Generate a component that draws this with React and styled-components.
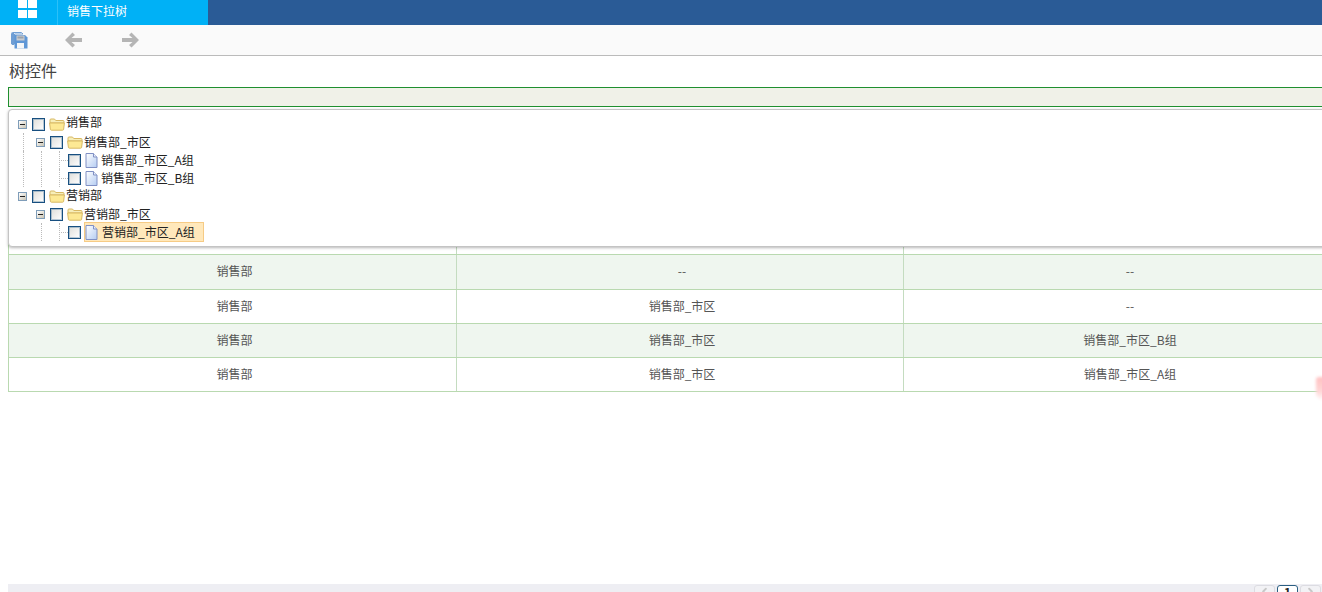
import styled, { createGlobalStyle } from "styled-components";
import { ChevronLeft, ChevronRight } from "lucide-react";

const treeData = [
  { level: 0, label: "销售部", kind: "folder", lift: 3, lines: [] },
  { level: 1, label: "销售部_市区", kind: "folder", lift: 1, lines: [0] },
  { level: 2, label: "销售部_市区_A组", kind: "file", lift: 1, lines: [0, 1, 2] },
  { level: 2, label: "销售部_市区_B组", kind: "file", lift: 1, lines: [0, 1, 2] },
  { level: 0, label: "营销部", kind: "folder", lift: 2, lines: [] },
  { level: 1, label: "营销部_市区", kind: "folder", lift: 1, lines: [] },
  { level: 2, label: "营销部_市区_A组", kind: "file", lift: 1, selected: true, lines: [1, 2] },
];

const rows = [
  ["销售部", "--", "--"],
  ["销售部", "销售部_市区", "--"],
  ["销售部", "销售部_市区", "销售部_市区_B组"],
  ["销售部", "销售部_市区", "销售部_市区_A组"],
];

function SaveIcon() {
  return (
    <svg width="17" height="17" viewBox="0 0 17 17" style={{ display: "block" }}>
      <path d="M.5 1.500a1 1 0 0 1 1-1h9l1.500 1.500H3.500v10H.5z" fill="#fff" stroke="#6f9ed4" />
      <rect x="1" y="1" width="2" height="12" fill="#6f9ed4" />
      <path d="M3.500 3h10.500l2.500 2.500v11H3.500z" fill="#5f97d6" />
      <rect x="5.500" y="3.500" width="8" height="5" fill="#c9ccd0" />
      <rect x="6.500" y="4.500" width="6" height="2" fill="#9aa2ab" />
      <rect x="6" y="11" width="7" height="5.500" fill="#f4f6f8" />
    </svg>
  );
}

function ArrowIcon({ flip }) {
  return (
    <svg
      width="17"
      height="16"
      viewBox="0 0 17 16"
      style={{ display: "block", transform: flip ? "scaleX(-1)" : "none" }}
    >
      <path d="M0 8 7.500.5 10 3 6.500 6H17v4H6.500l3.500 3-2.500 2.500z" fill="#b5b5b5" />
    </svg>
  );
}

function FolderIcon() {
  return (
    <svg width="16" height="13" viewBox="0 0 16 13" style={{ display: "block" }}>
      <path d="M1 3V2a1 1 0 0 1 1-1h3.500l1.200 1.500H14a1 1 0 0 1 1 1V5H1z" fill="#f7eeb8" stroke="#d8b964" />
      <path d="M.6 5h14.800l-.8 6.400a1 1 0 0 1-1 .8H2.400a1 1 0 0 1-1-.8z" fill="#fde994" stroke="#d8b964" />
    </svg>
  );
}

function FileIcon({ id }) {
  return (
    <svg width="13" height="15" viewBox="0 0 13 15" style={{ display: "block" }}>
      <defs>
        <linearGradient id={id} x1="0" y1="0" x2="1" y2="1">
          <stop offset="0" stopColor="#ffffff" />
          <stop offset="1" stopColor="#b4ccf2" />
        </linearGradient>
      </defs>
      <path d="M1 .5h7.500L12 4v10.500H1z" fill={`url(#${id})`} stroke="#8090c4" />
      <path d="M8.500.5V4H12" fill="#e8eefa" stroke="#8090c4" />
    </svg>
  );
}

function App() {
  return (
    <Page>
      <GlobalStyle />
      <TopBar>
        <Logo>
          <LogoGrid>
            <i />
            <i />
            <i />
            <i />
          </LogoGrid>
        </Logo>
        <ActiveTab>销售下拉树</ActiveTab>
      </TopBar>
      <Toolbar>
        <ToolButton $width={54}>
          <SaveIcon />
        </ToolButton>
        <ToolButton $width={57}>
          <ArrowIcon />
        </ToolButton>
        <ToolButton $width={40}>
          <ArrowIcon flip />
        </ToolButton>
      </Toolbar>
      <Title>树控件</Title>
      <Content>
        <SelectBox />
        <TreeWrap>
          <TreePanel>
            {treeData.map((node, i) => (
              <TreeRow key={i} $level={node.level}>
                {node.lines.map((line) => (
                  <Guide key={line} $level={line} />
                ))}
                {node.kind === "folder" ? <Expander /> : <Branch />}
                <Check />
                <NodeLabel $selected={node.selected} $file={node.kind === "file"}>
                  <IconSlot $file={node.kind === "file"} $selected={node.selected}>
                    {node.kind === "folder" ? <FolderIcon /> : <FileIcon id={`sheet${i}`} />}
                  </IconSlot>
                  <LabelText $lift={node.lift}>{node.label}</LabelText>
                </NodeLabel>
              </TreeRow>
            ))}
          </TreePanel>
        </TreeWrap>
        <Table>
          <HeaderRow>
            <Cell />
            <Cell />
            <Cell />
          </HeaderRow>
          {rows.map((row, i) => (
            <Row key={i} $striped={i % 2 === 0}>
              {row.map((text, j) => (
                <Cell key={j}>{text}</Cell>
              ))}
            </Row>
          ))}
        </Table>
        <Pager>
          <PageButton>
            <ChevronLeft size={11} strokeWidth={4} color="#c8c8c8" />
          </PageButton>
          <PageButton $active>1</PageButton>
          <PageButton>
            <ChevronRight size={11} strokeWidth={4} color="#c8c8c8" />
          </PageButton>
        </Pager>
      </Content>
      <Blob />
    </Page>
  );
}

export default App;

const GlobalStyle = createGlobalStyle`
  html, body {
    margin: 0;
    height: 592px;
    overflow: hidden;
    background: #fff;
  }
  * {
    box-sizing: border-box;
  }
`;

const Page = styled.div`
  position: relative;
  width: 1322px;
  height: 592px;
  overflow: hidden;
  font-family: "Noto Sans CJK SC", "Liberation Sans", sans-serif;
  font-size: 12px;
  color: #333;
`;

const TopBar = styled.div`
  height: 25px;
  display: flex;
  background: #2a5b96;
`;

const Logo = styled.div`
  width: 58px;
  padding-left: 18px;
  background: #00b1f6;
  border-right: 1px solid #2cc0f8;
`;

const LogoGrid = styled.div`
  width: 19px;
  height: 18px;
  display: grid;
  grid-template-columns: 9px 9px;
  grid-template-rows: 8px 8px;
  gap: 2px 1px;

  i {
    background: #fff;
  }
`;

const ActiveTab = styled.div`
  width: 150px;
  padding-left: 9px;
  line-height: 21px;
  color: #fff;
  background: #00b1f6;
`;

const Toolbar = styled.div`
  height: 31px;
  display: flex;
  align-items: center;
  padding-left: 11px;
  background: #fafafa;
  border-bottom: 1px solid #bbb;
`;

const ToolButton = styled.div`
  width: ${(p) => p.$width}px;
  display: flex;
  align-items: center;
`;

const Title = styled.div`
  height: 31px;
  padding-left: 9px;
  font-size: 16px;
  line-height: 28px;
  color: #444;
`;

const Content = styled.div`
  position: relative;
  padding-left: 8px;
`;

const SelectBox = styled.div`
  width: 1330px;
  height: 20px;
  background: #f0f1e8;
  border: 1px solid #1f8f2f;
`;

const TreeWrap = styled.div`
  position: absolute;
  z-index: 2;
  top: 22px;
  left: 8px;
`;

const TreePanel = styled.div`
  width: 1340px;
  height: 138px;
  padding: 5px 0 0 9px;
  background: #fff;
  border: 1px solid #c4c4c4;
  border-radius: 4px;
  box-shadow: 0 1px 3px rgba(0, 0, 0, 0.28);
`;

const TreeRow = styled.div`
  position: relative;
  height: 18px;
  display: flex;
  align-items: center;
  padding-left: ${(p) => p.$level * 18}px;
`;

const Guide = styled.span`
  position: absolute;
  top: 0;
  bottom: 0;
  left: ${(p) => p.$level * 18 + 5}px;
  border-left: 1px dotted #bbb;
`;

const Expander = styled.span`
  position: relative;
  width: 9px;
  height: 9px;
  margin-right: 5px;
  background: linear-gradient(135deg, #fff, #c9c4b4);
  border: 1px solid #7f9db9;

  &::after {
    content: "";
    position: absolute;
    left: 1px;
    right: 1px;
    top: 3px;
    height: 1px;
    background: #222;
  }
`;

const Branch = styled.span`
  width: 9px;
  height: 1px;
  margin-left: 5px;
  border-top: 1px dotted #bbb;
`;

const Check = styled.span`
  width: 13px;
  height: 13px;
  flex: none;
  background: linear-gradient(135deg, #dededa, #fff);
  border: 1px solid #174f80;
  box-shadow: inset 0 0 0 1px rgba(30, 90, 138, 0.3);
`;

const NodeLabel = styled.span`
  height: 18px;
  display: flex;
  align-items: center;
  margin-left: ${(p) => (p.$selected ? 4 : p.$file ? 3 : 4)}px;
  padding-right: ${(p) => (p.$selected ? 8 : 0)}px;
  white-space: nowrap;
  color: #222;
  background: ${(p) => (p.$selected ? "#ffe8bb" : "transparent")};
  outline: ${(p) => (p.$selected ? "1px solid #f6cb85" : "none")};
`;

const IconSlot = styled.span`
  display: flex;
  align-items: center;
  margin-left: ${(p) => (p.$file && !p.$selected ? 1 : 0)}px;
  margin-right: ${(p) => (p.$selected ? 4 : p.$file ? 3 : 1)}px;
`;

const LabelText = styled.span`
  position: relative;
  top: -${(p) => p.$lift}px;
`;

const Table = styled.div`
  width: 1344px;
  margin-top: 114px;
  border-left: 1px solid #b9d9b0;
`;

const Row = styled.div`
  height: 34.25px;
  display: grid;
  grid-template-columns: 448px 447px 449px;
  background: ${(p) => (p.$striped ? "#eff6ef" : "#fff")};
  border-bottom: 1px solid #b9d9b0;
`;

const HeaderRow = styled(Row)`
  background: #fff;
`;

const Cell = styled.div`
  display: flex;
  align-items: center;
  justify-content: center;
  padding: 0 0 2px 4px;
  font-size: 12px;
  color: #555;
  border-right: 1px solid #c4dcc0;
`;

const Pager = styled.div`
  width: 1320px;
  height: 30px;
  display: flex;
  gap: 2px;
  margin-top: 192px;
  padding: 1px 0 0 1246px;
  background: #eeeef3;
`;

const PageButton = styled.div`
  width: 21px;
  height: 24px;
  display: flex;
  justify-content: center;
  font-size: 12px;
  font-weight: 700;
  line-height: 12px;
  color: #222;
  background: ${(p) => (p.$active ? "#fff" : "#f2f2f5")};
  border: 1px solid ${(p) => (p.$active ? "#2b5f82" : "#dcdce2")};
  border-radius: 3px;
`;

const Blob = styled.div`
  position: absolute;
  top: 377px;
  left: 1316px;
  width: 14px;
  height: 24px;
  background: linear-gradient(#ffc0c0, #ffd6d6 60%, #fff);
  filter: blur(1.5px);
  border-radius: 3px 0 0 8px;
`;
